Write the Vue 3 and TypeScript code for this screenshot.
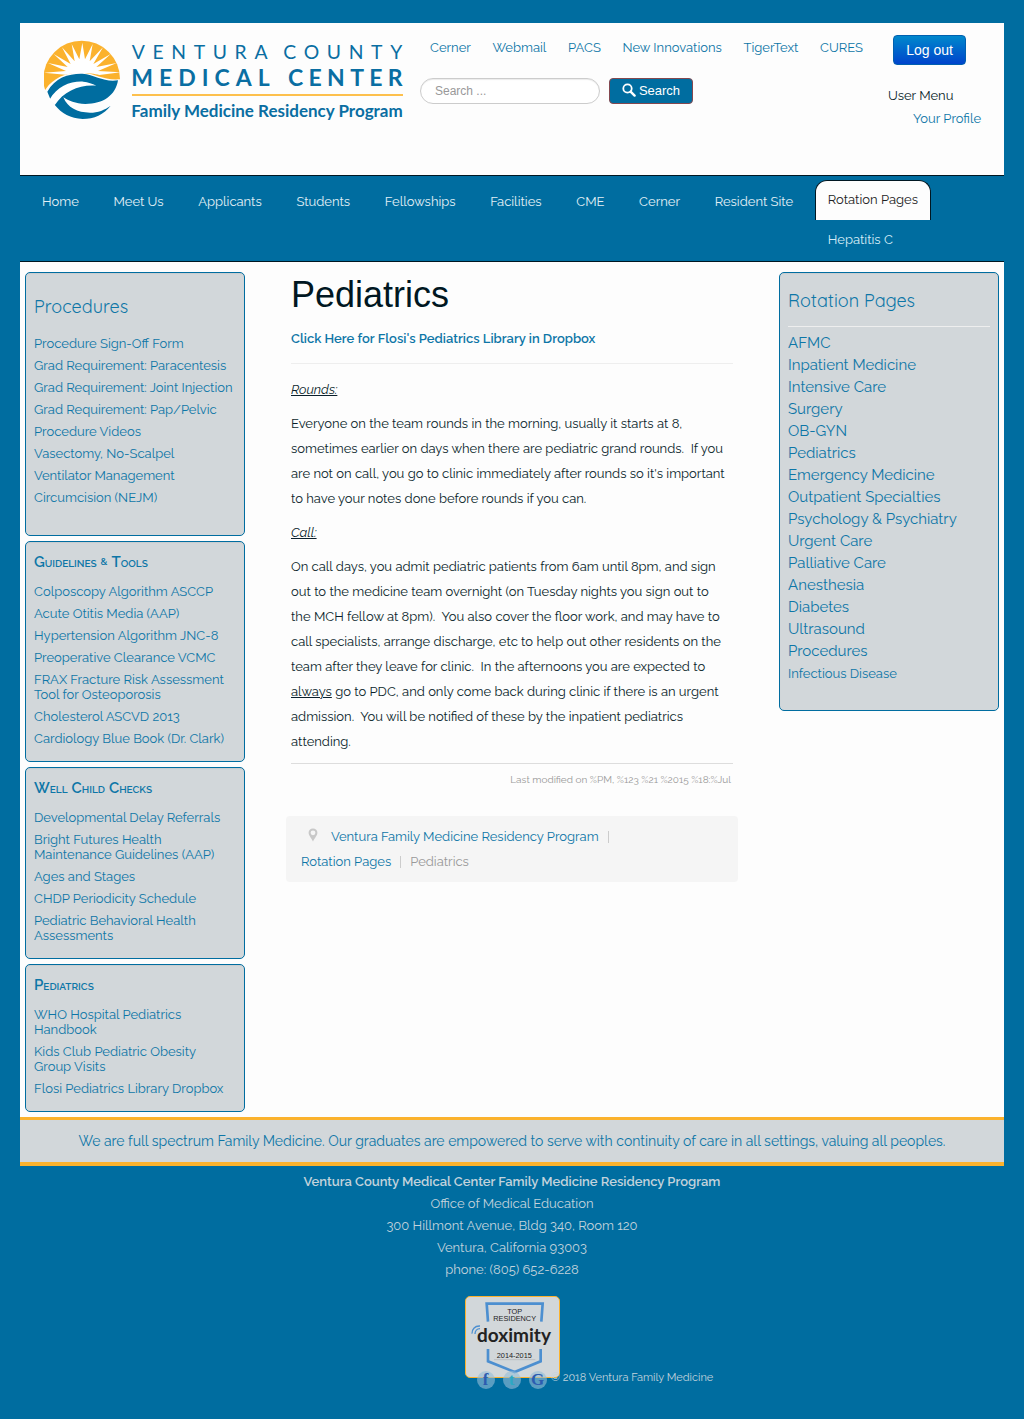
<script setup lang="ts">
interface NavItem {
  label: string
  active?: boolean
  child?: string
}

interface Panel {
  title: string
  items: string[]
  roomy?: boolean
}

const quickLinks: string[] = ['Cerner', 'Webmail', 'PACS', 'New Innovations', 'TigerText', 'CURES']

const navItems: NavItem[] = [
  { label: 'Home' },
  { label: 'Meet Us' },
  { label: 'Applicants' },
  { label: 'Students' },
  { label: 'Fellowships' },
  { label: 'Facilities' },
  { label: 'CME' },
  { label: 'Cerner' },
  { label: 'Resident Site' },
  { label: 'Rotation Pages', active: true, child: 'Hepatitis C' },
]

const panels: Panel[] = [
  {
    title: 'Procedures',
    roomy: true,
    items: [
      'Procedure Sign-Off Form',
      'Grad Requirement: Paracentesis',
      'Grad Requirement: Joint Injection',
      'Grad Requirement: Pap/Pelvic',
      'Procedure Videos',
      'Vasectomy, No-Scalpel',
      'Ventilator Management',
      'Circumcision (NEJM)',
    ],
  },
  {
    title: 'Guidelines & Tools',
    items: [
      'Colposcopy Algorithm ASCCP',
      'Acute Otitis Media (AAP)',
      'Hypertension Algorithm JNC-8',
      'Preoperative Clearance VCMC',
      'FRAX Fracture Risk Assessment\nTool for Osteoporosis',
      'Cholesterol ASCVD 2013',
      'Cardiology Blue Book (Dr. Clark)',
    ],
  },
  {
    title: 'Well Child Checks',
    items: [
      'Developmental Delay Referrals',
      'Bright Futures Health\nMaintenance Guidelines (AAP)',
      'Ages and Stages',
      'CHDP Periodicity Schedule',
      'Pediatric Behavioral Health\nAssessments',
    ],
  },
  {
    title: 'Pediatrics',
    items: [
      'WHO Hospital Pediatrics\nHandbook',
      'Kids Club Pediatric Obesity\nGroup Visits',
      'Flosi Pediatrics Library Dropbox',
    ],
  },
]

const rotations: string[] = [
  'AFMC',
  'Inpatient Medicine',
  'Intensive Care',
  'Surgery',
  'OB-GYN',
  'Pediatrics',
  'Emergency Medicine',
  'Outpatient Specialties',
  'Psychology & Psychiatry',
  'Urgent Care',
  'Palliative Care',
  'Anesthesia',
  'Diabetes',
  'Ultrasound',
  'Procedures',
]
</script>

<template>
  <div class="page">
    <header class="header">
      <a href="#" class="logo" aria-label="Ventura County Medical Center">
        <svg viewBox="0 9 1200 351" width="400" height="117">
          <defs>
            <clipPath id="disc"><circle cx="185" cy="177" r="115" /></clipPath>
          </defs>
          <path d="M72 215 V60 H300 V178 C250 182 230 160 185 158 C140 156 100 175 78 206 Z" fill="#fbb22d" clip-path="url(#disc)" />
          <path
            d="M72 158 L138 153 L84 129 L143 141 L101 102 L152 132 L126 82 L164 124 L155 72 L178 118 L187 68 L195 118 L218 72 L209 124 L249 82 L220 132 L272 102 L229 141 L290 129 L234 153 L302 157 L238 165 C215 158 160 156 136 164 Z"
            fill="#fff"
          />
          <path d="M82 215 C105 172 148 160 187 161 C227 164 252 188 294 181 C287 226 250 252 196 252 C166 251 146 242 130 232 C143 263 172 278 210 278 C234 278 254 270 272 257 C252 283 222 297 188 297 C152 296 124 280 105 256 L92 240 Z" fill="#006da0" />
          <path d="M88 240 C112 198 152 183 190 185 C205 186 216 191 229 197 C180 193 132 212 104 256 Z" fill="#fff" />
          <rect x="336" y="222" width="813" height="6" fill="#fdc04d" />
          <g fill="#0a6ea2">
            <text x="335" y="117" font-size="58" letter-spacing="23">VENTURA</text>
            <text x="790" y="117" font-size="58" letter-spacing="23">COUNTY</text>
            <text x="334" y="198" font-size="69" font-weight="bold" letter-spacing="18">MEDICAL</text>
            <text x="804" y="198" font-size="69" font-weight="bold" letter-spacing="16">CENTER</text>
            <text x="334" y="291" font-size="51" font-weight="bold">Family Medicine Residency Program</text>
          </g>
        </svg>
      </a>

      <div class="header-mid">
        <nav class="quick">
          <a v-for="link in quickLinks" :key="link" href="#">{{ link }}</a>
        </nav>
        <form class="search" @submit.prevent>
          <input type="search" placeholder="Search ..." aria-label="Search" />
          <button type="submit">
            <svg viewBox="0 0 14 14" width="14" height="14">
              <circle cx="5.5" cy="5.5" r="4.2" fill="none" stroke="#fff" stroke-width="1.8" />
              <path d="M8.6 8.6 L12.6 12.6" stroke="#fff" stroke-width="2.4" stroke-linecap="round" />
            </svg>
            Search
          </button>
        </form>
      </div>

      <div class="account">
        <button type="button" class="logout">Log out</button>
        <p>User Menu</p>
        <a href="#">Your Profile</a>
      </div>
    </header>

    <nav class="nav">
      <div v-for="item in navItems" :key="item.label" class="nav-item" :class="{ active: item.active }">
        <a href="#">{{ item.label }}</a>
        <a v-if="item.child" href="#" class="child">{{ item.child }}</a>
      </div>
    </nav>

    <div class="columns">
      <aside class="side">
        <section v-for="panel in panels" :key="panel.title" class="panel" :class="{ roomy: panel.roomy }">
          <h3 v-if="panel.roomy">{{ panel.title }}</h3>
          <h3 v-else class="caps">
            <span v-for="word in panel.title.split(' ')" :key="word">{{ word }}</span>
          </h3>
          <ul>
            <li v-for="item in panel.items" :key="item"><a href="#">{{ item }}</a></li>
          </ul>
        </section>
      </aside>

      <main class="content">
        <article>
          <h1>Pediatrics</h1>
          <p class="lead"><a href="#">Click Here for Flosi's Pediatrics Library in Dropbox</a></p>
          <hr />
          <p><em>Rounds:</em></p>
          <p>
            Everyone on the team rounds in the morning, usually it starts at 8,<br />
            sometimes earlier on days when there are pediatric grand rounds.&nbsp; If you<br />
            are not on call, you go to clinic immediately after rounds so it's important<br />
            to have your notes done before rounds if you can.
          </p>
          <p><em>Call:</em></p>
          <p>
            On call days, you admit pediatric patients from 6am until 8pm, and sign<br />
            out to the medicine team overnight (on Tuesday nights you sign out to<br />
            the MCH fellow at 8pm).&nbsp; You also cover the floor work, and may have to<br />
            call specialists, arrange discharge, etc to help out other residents on the<br />
            team after they leave for clinic.&nbsp; In the afternoons you are expected to<br />
            <u>always</u> go to PDC, and only come back during clinic if there is an urgent<br />
            admission.&nbsp; You will be notified of these by the inpatient pediatrics<br />
            attending.
          </p>
          <p class="modified">Last modified on %PM, %123 %21 %2015 %18:%Jul</p>
        </article>
        <nav class="crumbs" aria-label="Breadcrumb">
          <div>
            <svg viewBox="0 0 10 14" width="10" height="14">
              <path d="M5 0.500 C2.300 0.500 0.600 2.400 0.600 4.800 C0.600 7.600 3.400 10 5 13.500 C6.600 10 9.400 7.600 9.400 4.800 C9.400 2.400 7.700 0.500 5 0.500 Z M5 2.400 A2.400 2.400 0 1 1 5 7.200 A2.400 2.400 0 1 1 5 2.400 Z" fill="#c8c8c8" fill-rule="evenodd" />
            </svg>
            <a href="#">Ventura Family Medicine Residency Program</a>
            <i></i>
          </div>
          <div>
            <a href="#">Rotation Pages</a>
            <i></i>
            <span>Pediatrics</span>
          </div>
        </nav>
      </main>

      <aside class="side">
        <section class="panel rotations">
          <h3>Rotation Pages</h3>
          <ul>
            <li v-for="item in rotations" :key="item"><a href="#">{{ item }}</a></li>
            <li class="minor"><a href="#">Infectious Disease</a></li>
          </ul>
        </section>
      </aside>
    </div>

    <p class="motto">We are full spectrum Family Medicine. Our graduates are empowered to serve with continuity of care in all settings, valuing all peoples.</p>

    <footer class="footer">
      <strong>Ventura County Medical Center Family Medicine Residency Program</strong>
      <span>Office of Medical Education</span>
      <span>300 Hillmont Avenue, Bldg 340, Room 120</span>
      <span>Ventura, California 93003</span>
      <span>phone: (805) 652-6228</span>
      <a href="#" class="badge" aria-label="Doximity top residency">
        <svg viewBox="0 0 279 240" width="93" height="80">
          <g fill="none" stroke="#4c8fd0" stroke-width="8">
            <path d="M66 74 L62 20 H230 L226 74" />
            <path d="M66 156 V193 L146 225 L224 193 V156" />
          </g>
          <g fill="none" stroke="#4c8fd0" stroke-width="4">
            <path d="M18 110 C17 98 26 86 42 87" />
            <path d="M27 111 C27 102 33 95 42 95" />
          </g>
          <path d="M84 188 H208" stroke="#b0b4b8" stroke-width="2" />
          <g fill="#222" text-anchor="middle">
            <text x="146" y="50" font-size="22" class="badge-small">TOP</text>
            <text x="146" y="72" font-size="22" class="badge-small">RESIDENCY</text>
            <text x="144" y="136" font-size="57" font-weight="bold">doximity</text>
            <text x="145" y="184" font-size="22" class="badge-small">2014-2015</text>
          </g>
        </svg>
      </a>
      <div class="social">
        <a href="#" class="fb" aria-label="Facebook">f</a>
        <a href="#" class="tw" aria-label="Twitter">t</a>
        <a href="#" class="gp" aria-label="Google">G</a>
        <small>© 2018 Ventura Family Medicine</small>
      </div>
    </footer>
  </div>
</template>

<style>
body {
  margin: 0;
  background: #006da0;
}
</style>

<style scoped>
.page {
  padding: 23px 20px 28px;
  font: 13px/22px Raleway, 'Open Sans', sans-serif;
  color: #0a1f2b;
}
a {
  color: #0d76a7;
  text-decoration: none;
}
ul,
h1,
h3,
p {
  margin: 0;
  padding: 0;
}
ul {
  list-style: none;
}
.header {
  display: flex;
  height: 152px;
  background: #fdfdfd;
}
.logo text {
  font-family: Lato, sans-serif;
}
.header-mid {
  flex: 1;
  padding-top: 14px;
}
.quick {
  display: flex;
  justify-content: space-between;
  padding: 0 25px 0 10px;
  white-space: nowrap;
}
.search {
  display: flex;
  gap: 9px;
  margin-top: 19px;
}
.search input {
  box-sizing: border-box;
  width: 180px;
  height: 26px;
  padding: 0 14px;
  border: 1px solid #ccc;
  border-radius: 13px;
  background: #fff;
  box-shadow: inset 0 1px 1px rgba(0, 0, 0, 0.08);
  font: 12px 'Liberation Sans', sans-serif;
}
.search input::placeholder {
  color: #999;
}
.search button {
  display: flex;
  align-items: center;
  justify-content: center;
  gap: 3px;
  width: 84px;
  height: 26px;
  padding: 0 0 2px;
  border: 1px solid #85484f;
  border-radius: 4px;
  background: #006da0;
  color: #fff;
  font: 13px 'Liberation Sans', sans-serif;
}
.account {
  display: flex;
  flex-direction: column;
  align-items: flex-start;
  width: 116px;
  padding-top: 12px;
}
.logout {
  width: 73px;
  height: 30px;
  margin: 0 5px 20px;
  padding: 0;
  border: 1px solid #0060b0;
  border-radius: 4px;
  background: linear-gradient(#0088cc, #0044cc);
  color: #fff;
  font: 14px 'Liberation Sans', sans-serif;
}
.account a {
  margin: 1px 0 0 25px;
}
.nav {
  display: flex;
  justify-content: space-between;
  height: 85px;
  padding: 0 73px 0 5px;
  border-top: 1px solid #001722;
  border-bottom: 1px solid #001722;
  background: #006da0;
  white-space: nowrap;
}
.nav-item {
  position: relative;
  padding: 15px 17px;
}
.nav-item a {
  color: #e3f0f6;
}
.nav-item.active {
  box-sizing: border-box;
  height: 40px;
  margin: 4px 0 0 4px;
  padding: 8px 12px;
  border: 1px solid #001722;
  border-bottom: 0;
  border-radius: 12px 12px 0 0;
  background: #fdfdfd;
}
.nav-item.active a {
  color: #222;
}
.nav-item.active .child {
  position: absolute;
  top: 48px;
  left: 12px;
  color: #d5ecf6;
}
.columns {
  display: grid;
  grid-template-columns: 220px minmax(0, 1fr) 220px;
  gap: 41px;
  align-items: start;
  padding: 10px 5px 5px;
  background: #fdfdfd;
}
.side {
  display: grid;
  gap: 5px;
}
.panel {
  padding: 9px 8px 8px;
  border: 1px solid #006da0;
  border-radius: 5px;
  background: #d2d7da;
  box-shadow: inset 0 1px 1px rgba(0, 0, 0, 0.05);
}
.panel h3 {
  color: #0d76a7;
}
.panel .caps {
  display: flex;
  gap: 4px;
  height: 22px;
  margin-bottom: 11px;
  font-size: 10px;
  font-weight: 600;
  line-height: 22px;
  text-transform: uppercase;
}
.caps span {
  display: block;
}
.caps span::first-letter {
  font-size: 15px;
}
.panel li {
  margin-bottom: 7px;
  line-height: 15px;
  white-space: pre;
}
.panel.roomy {
  padding-bottom: 23px;
}
.panel.rotations {
  padding-bottom: 22px;
}
.panel.roomy h3,
.panel.rotations h3 {
  font: 18px/22px Quicksand, Lato, sans-serif;
}
.panel.roomy h3 {
  margin: 14px 0 18px;
}
.panel.rotations h3 {
  margin: 8px 0 9px;
  padding-bottom: 14px;
  border-bottom: 1px solid #eee;
}
.rotations li {
  font-size: 15px;
}
.rotations .minor {
  font-size: 13px;
}
article {
  padding: 0 5px;
  white-space: nowrap;
}
h1 {
  margin-bottom: 9px;
  font: 36px/45px 'Liberation Sans', sans-serif;
  color: #001722;
}
article p {
  margin-bottom: 9px;
  line-height: 25px;
}
.lead {
  font-weight: 600;
}
hr {
  margin: 12px 0 13px;
  border: 0;
  border-top: 1px solid #eee;
}
em {
  text-decoration: underline;
}
article .modified {
  margin: 0;
  padding: 3px 2px 0;
  border-top: 1px solid #ddd;
  font-size: 10px;
  text-align: right;
  color: #999;
}
.crumbs {
  margin-top: 24px;
  padding: 8px 15px;
  border-radius: 4px;
  background: #f5f5f5;
  line-height: 25px;
}
.crumbs div {
  display: flex;
  align-items: center;
}
.crumbs svg {
  margin: 0 13px 4px 7px;
}
.crumbs i {
  width: 1px;
  height: 12px;
  margin: 0 9px;
  background: #ccc;
}
.crumbs span {
  color: #999;
}
.motto {
  padding: 10px 0;
  border-top: 3px solid #fbb22d;
  border-bottom: 4px solid #fbb22d;
  background: #d2d7da;
  color: #0d76a7;
  font-size: 14px;
  text-align: center;
}
.footer {
  display: flex;
  flex-direction: column;
  align-items: center;
  padding-top: 5px;
  color: #c3d3dc;
}
.footer strong {
  font-weight: 600;
}
.badge {
  display: flex;
  margin-top: 15px;
  border: 1px solid #fbb22d;
  border-radius: 5px;
  background: #d2d7da;
}
.badge text {
  font-family: Lato, sans-serif;
}
.badge .badge-small {
  font-family: 'Liberation Sans', sans-serif;
}
.social {
  display: flex;
  align-items: center;
  gap: 8px;
  margin: -9px 0 0 166px;
  position: relative;
}
.social a {
  width: 18px;
  height: 18px;
  margin-top: 2px;
  border-radius: 50%;
  background: rgba(150, 190, 215, 0.6);
  font: bold 17px/18px 'Liberation Serif', serif;
  text-align: center;
}
.social .fb,
.social .gp {
  color: #2c5cb0;
}
.social .tw {
  color: #2ba8c4;
}
.social small {
  margin: -2px 0 0 -4px;
  font-size: 11px;
}
</style>
